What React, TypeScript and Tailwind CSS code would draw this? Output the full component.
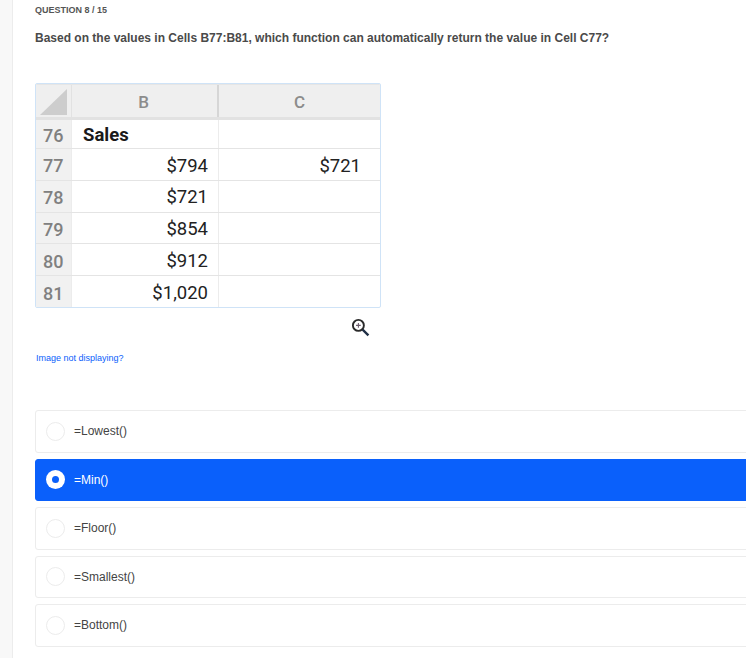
import React from 'react';

const OPTIONS = ['=Lowest()', '=Min()', '=Floor()', '=Smallest()', '=Bottom()'];
const SELECTED = 1;

const ROWS = [
  { n: '76', b: 'Sales', c: '', head: true },
  { n: '77', b: '$794', c: '$721' },
  { n: '78', b: '$721', c: '' },
  { n: '79', b: '$854', c: '' },
  { n: '80', b: '$912', c: '' },
  { n: '81', b: '$1,020', c: '' },
];

const SheetImage: React.FC = () => (
  <div
    className="w-[346px] h-[225px] border border-[#cfe3f7] rounded-[2px] bg-white overflow-hidden flex flex-col"
    style={{ fontFamily: 'Roboto, sans-serif' }}
  >
    {/* Column headers */}
    <div className="flex h-[36px] shrink-0 bg-[#efefef] border-b-[3px] border-[#e2e2e2] border-t border-t-[#e6e6e6]">
      <div className="w-[35px] shrink-0 flex items-end justify-center pb-[2px]">
        <svg width="27" height="26" viewBox="0 0 27 26">
          <polygon points="0,26 27,0 27,26" fill="#cdcdcd" />
        </svg>
      </div>
      <div className="w-[148px] shrink-0 border-l border-[#e2e2e2] border-r-2 border-r-[#d6d6d6] flex items-center justify-center pr-[2px] pt-[3px] text-[17px] font-medium text-[#8c8c8c]">
        B
      </div>
      <div className="flex-1 flex items-center justify-center pt-[3px] text-[17px] font-medium text-[#8c8c8c]">C</div>
    </div>
    {/* Data rows */}
    {ROWS.map((row) => (
      <div
        key={row.n}
        className={`flex border-b border-[#e4e4e4] last:border-b-0 ${row.head ? 'h-[29px] shrink-0' : 'flex-1 min-h-0'}`}
      >
        <div className="w-[35px] shrink-0 bg-[#f1f1f1] flex items-center pl-[7px] pt-[3px] text-[18px] font-medium text-[#808080]">
          {row.n}
        </div>
        <div
          className={`w-[148px] shrink-0 border-l border-r border-[#ececec] flex items-center ${
            row.head ? 'pl-[11px] pt-[3px] text-[18.5px] font-bold text-[#1a1a1a]' : 'justify-end pr-[10px] pt-[4px] text-[18.5px] text-[#222222]'
          }`}
        >
          {row.b}
        </div>
        <div className="flex-1 flex items-center justify-end pr-[19px] pt-[4px] text-[18.5px] text-[#222222]">{row.c}</div>
      </div>
    ))}
  </div>
);

const ZoomIcon: React.FC = () => (
  <svg width="19" height="19" viewBox="0 0 18 18" fill="none">
    <circle cx="7" cy="7" r="5.2" stroke="#2a2a2a" strokeWidth="1.8" />
    <path d="M11 11l5.5 5.5" stroke="#1f2f45" strokeWidth="2.2" />
    <path d="M7 4.8v4.4M4.8 7h4.4" stroke="#6a5a6a" strokeWidth="1" />
  </svg>
);

const Option: React.FC<{ label: string; selected: boolean }> = ({ label, selected }) => (
  <div
    className={`h-[42.5px] w-[740px] shrink-0 rounded-[3px] border flex items-center pl-[10px] gap-[9px] text-[12px] ${
      selected ? 'bg-[#0a60fb] border-[#0a60fb] text-white' : 'bg-white border-[#ececec] text-[#444444]'
    }`}
  >
    {selected ? (
      <span className="w-[19px] h-[19px] rounded-full bg-white flex items-center justify-center shrink-0">
        <span className="w-[7px] h-[7px] rounded-full bg-[#0a60fb]" />
      </span>
    ) : (
      <span className="w-[19px] h-[19px] rounded-full border border-[#ececec] bg-white shrink-0" />
    )}
    <span>{label}</span>
  </div>
);

export default function App() {
  return (
    <div
      className="w-[746px] h-[658px] overflow-hidden flex bg-white"
      style={{ fontFamily: '"Liberation Sans", Arial, sans-serif' }}
    >
      <div className="w-[13px] shrink-0 bg-[#f8f8f8] border-r border-[#ececec]" />
      <main className="flex-1 min-w-0 pl-[22px] pt-[4px]">
        <div className="text-[9px] leading-[12px] font-bold text-[#555555]">QUESTION 8 / 15</div>
        <h1 className="mt-[15px] text-[12px] leading-[14px] font-bold text-[#4a4a4a]">
          Based on the values in Cells B77:B81, which function can automatically return the value in Cell C77?
        </h1>
        <div className="mt-[38px]">
          <SheetImage />
        </div>
        <div className="w-[346px] flex justify-end mt-[10px] pr-[11px]">
          <ZoomIcon />
        </div>
        <a className="block mt-[16px] pl-[1px] text-[9px] leading-[11px] text-[#0a60fb]">Image not displaying?</a>
        <div className="mt-[46px] flex flex-col gap-[6px]">
          {OPTIONS.map((o, i) => (
            <Option key={o} label={o} selected={i === SELECTED} />
          ))}
        </div>
      </main>
    </div>
  );
}
